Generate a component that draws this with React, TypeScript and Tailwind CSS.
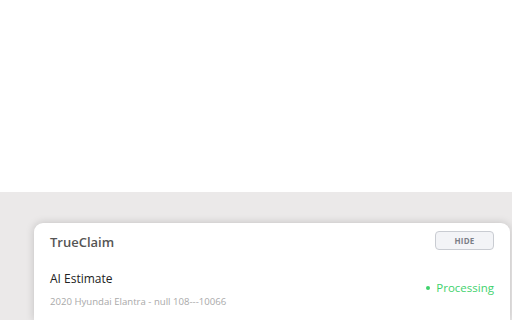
import React from 'react';

const App: React.FC = () => {
  return (
    <div className="flex flex-col h-[320px] w-[512px] overflow-hidden bg-white" style={{ fontFamily: '"Open Sans", sans-serif' }}>
      {/* Empty page area */}
      <div className="h-[192px] bg-white" />

      {/* Overlay tray */}
      <div className="flex-1 bg-[#ebe9e9] pt-[31px] pl-[34px] pr-[2px]">
        <div className="h-full rounded-t-[9px] bg-white shadow-[0_0_8px_rgba(0,0,0,0.18)] pl-[16px] pr-[16px] pt-[8px]">
          {/* Header */}
          <div className="flex items-center justify-between">
            <h1 className="text-[13px] font-semibold text-[#555555] leading-none pt-[3px]">TrueClaim</h1>
            <button className="w-[59px] h-[19px] rounded-[4px] border border-[#c9ccd2] bg-[#f3f4f7] text-[8px] font-bold text-[#7b7f87] tracking-wide">
              HIDE
            </button>
          </div>

          {/* Estimate row */}
          <div className="flex items-start justify-between mt-[23px]">
            <div className="flex flex-col">
              <span className="text-[12px] text-[#222222] leading-none">AI Estimate</span>
              <span className="text-[9.6px] text-[#a9a9a9] leading-none mt-[12px]">2020 Hyundai Elantra - null 108---10066</span>
            </div>
            <div className="flex items-center gap-[6px] mt-[9px]">
              <span className="w-[4px] h-[4px] rounded-full bg-[#3fd26c]" />
              <span className="text-[11.5px] text-[#3fd26c] leading-none">Processing</span>
            </div>
          </div>
        </div>
      </div>
    </div>
  );
};

export default App;
